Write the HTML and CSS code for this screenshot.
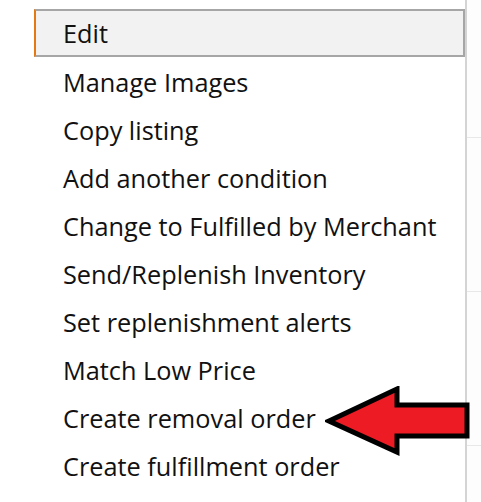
FILE: index.html
```html
<!DOCTYPE html>
<html>
<head>
<meta charset="utf-8">
<link rel="stylesheet" href="styles.css">
</head>
<body>
<div class="page">
  <div class="menu">
    <ul class="menu-list">
      <li class="menu-item active">Edit</li>
      <li class="menu-item">Manage Images</li>
      <li class="menu-item">Copy listing</li>
      <li class="menu-item">Add another condition</li>
      <li class="menu-item">Change to Fulfilled by Merchant</li>
      <li class="menu-item">Send/Replenish Inventory</li>
      <li class="menu-item">Set replenishment alerts</li>
      <li class="menu-item">Match Low Price</li>
      <li class="menu-item">Create removal order</li>
      <li class="menu-item">Create fulfillment order</li>
    </ul>
  </div>
  <div class="side">
    <div class="side-row r1"></div>
    <div class="side-row r2"></div>
    <div class="side-row r3"></div>
  </div>
  <svg class="arrow" width="146" height="70" viewBox="0 0 146 70">
    <polygon points="4,35 72,3 72,19 142,19 142,50 72,50 72,66" fill="#ed1c24" stroke="#000" stroke-width="5" stroke-linejoin="miter"/>
  </svg>
</div>
</body>
</html>
```
FILE: styles.css
```css
html, body {
  margin: 0;
  padding: 0;
  background: #fff;
}
.page {
  position: relative;
  width: 481px;
  height: 502px;
  overflow: hidden;
  display: flex;
}
.menu {
  width: 431px;
  margin-left: 34px;
  border-right: 2px solid #d4d4d4;
  padding-top: 9px;
}
.menu-list {
  list-style: none;
  margin: 0;
  padding: 0;
}
.menu-item {
  height: 48px;
  box-sizing: border-box;
  display: flex;
  align-items: center;
  padding-left: 29px;
  padding-top: 1px;
  font-family: "Open Sans", "Segoe UI", sans-serif;
  font-size: 25.3px;
  color: #111;
  white-space: nowrap;
}
.menu-item.active {
  background: #f2f2f2;
  border: 2px solid #a6a6a6;
  border-left: 2px solid #e47911;
  padding-left: 27px;
  padding-top: 0;
}
.side {
  flex: 1;
  background: #fdfdfd;
  position: relative;
}
.side-row {
  position: absolute;
  left: 0;
  right: 0;
  height: 1px;
  background: #e8e8e8;
}
.r1 { top: 137px; }
.r2 { top: 291px; }
.r3 { top: 445px; }
.arrow {
  position: absolute;
  left: 325px;
  top: 386px;
}
```
